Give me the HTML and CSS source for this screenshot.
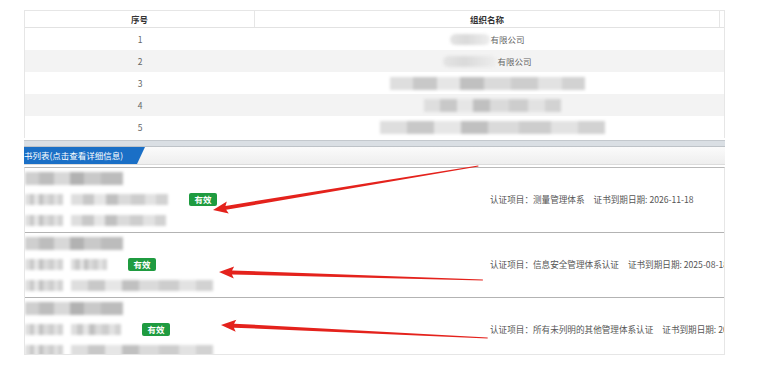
FILE: index.html
```html
<!DOCTYPE html>
<html lang="zh-CN">

<head>
    <meta charset="UTF-8">
    <title>证书列表</title>
    <link rel="stylesheet" href="styles.css">
</head>

<body>
    <div class="page">
        <div class="grid">
            <div class="grid-head">
                <div class="th th-no">序号</div>
                <div class="th th-name">组织名称</div>
                <div class="th th-gap"></div>
            </div>
            <div class="grid-row">
                <div class="td td-no">1</div>
                <div class="td td-name"><span class="mask mask-soft w40"></span>有限公司</div>
            </div>
            <div class="grid-row odd">
                <div class="td td-no">2</div>
                <div class="td td-name"><span class="mask mask-soft w54"></span>有限公司</div>
            </div>
            <div class="grid-row">
                <div class="td td-no">3</div>
                <div class="td td-name"><span class="mask mask-tall w195"></span></div>
            </div>
            <div class="grid-row odd">
                <div class="td td-no">4</div>
                <div class="td td-name"><span class="mask mask-tall w137 shift"></span></div>
            </div>
            <div class="grid-row">
                <div class="td td-no">5</div>
                <div class="td td-name"><span class="mask mask-tall w225 shift"></span></div>
            </div>
        </div>

        <div class="sep"></div>
        <div class="tabbar">
            <div class="tab">书列表(点击查看详细信息)</div>
        </div>

        <div class="list">
            <div class="cert">
                <div class="cert-line"><span class="mask mask-top w98"></span></div>
                <div class="cert-line"><span class="mask w38"></span><span class="mask w97"></span><span class="badge">有效</span></div>
                <div class="cert-info">认证项目：测量管理体系<span class="gap"></span>证书到期日期: 2026-11-18</div>
                <div class="cert-line"><span class="mask w38"></span><span class="mask w95"></span></div>
            </div>
            <div class="cert">
                <div class="cert-line"><span class="mask mask-top w98"></span></div>
                <div class="cert-line"><span class="mask w38"></span><span class="mask w36"></span><span class="badge">有效</span></div>
                <div class="cert-info">认证项目：信息安全管理体系认证<span class="gap"></span>证书到期日期: 2025-08-18</div>
                <div class="cert-line"><span class="mask w38"></span><span class="mask w142"></span></div>
            </div>
            <div class="cert last">
                <div class="cert-line"><span class="mask mask-top w98"></span></div>
                <div class="cert-line"><span class="mask w38"></span><span class="mask w50"></span><span class="badge">有效</span></div>
                <div class="cert-info">认证项目：所有未列明的其他管理体系认证<span class="gap"></span>证书到期日期: 2026-03-05</div>
                <div class="cert-line"><span class="mask w38"></span><span class="mask w142"></span></div>
            </div>
        </div>
    </div>

    <!-- 标注箭头 -->
    <svg class="arrows" width="762" height="376" viewBox="0 0 762 376">
        <g fill="#e4221c">
            <polygon transform="translate(213 210) rotate(-9.43)" points="0,0 15,-6 13,-2 269,-0.5 269,0.5 13,2 15,6" />
            <polygon transform="translate(219 272) rotate(1.74)" points="0,0 15,-6 13,-2 264,-0.5 264,0.5 13,2 15,6" />
            <polygon transform="translate(221 325) rotate(2.79)" points="0,0 15,-6 13,-2 267,-0.5 267,0.5 13,2 15,6" />
        </g>
    </svg>
</body>

</html>
```

FILE: styles.css
```css
* {
    box-sizing: border-box;
    padding: 0;
    margin: 0;
}

body {
    position: relative;
    background: #fff;
    font-family: "Noto Sans CJK SC", "Liberation Sans", sans-serif;
    color: #555;
}

.page {
    width: 701px;
    margin-left: 24px;
    padding-top: 10px;
}

/* 表格 */
.grid {
    border: 1px solid #e6e6e6;
    border-bottom: none;
}

.grid-head {
    display: flex;
    height: 17px;
    border-bottom: 1px solid #e2e2e2;
}

.th {
    font-size: 8.5px;
    font-weight: bold;
    color: #333;
    text-align: center;
    line-height: 16px;
    border-right: 1px solid #e6e6e6;
}

.th-no {
    width: 230px;
}

.th-name {
    width: 465px;
}

.th-gap {
    flex: 1;
    border-right: none;
}

.grid-row {
    display: flex;
    height: 22px;
    align-items: center;
}

.grid-row.odd {
    background-color: #f3f3f3;
}

.td {
    font-size: 8.5px;
    color: #666;
    text-align: center;
}

.td-no {
    width: 230px;
}

.td-name {
    width: 465px;
    display: flex;
    justify-content: center;
    align-items: center;
}

/* 打码 */
.mask {
    display: inline-block;
    height: 11px;
    margin-right: 8px;
    background: linear-gradient(90deg, #dedede 0 12%, #c8c8c8 12% 24%, #e6e6e6 24% 36%, #c0c0c0 36% 48%, #dadada 48% 62%, #cdcdcd 62% 76%, #e2e2e2 76% 88%, #d2d2d2 88%);
    filter: blur(1.5px);
}

.mask-top {
    height: 13px;
    background: linear-gradient(90deg, #cfcfcf 0 14%, #bdbdbd 14% 30%, #d8d8d8 30% 46%, #b2b2b2 46% 60%, #c9c9c9 60% 78%, #bcbcbc 78%);
}

.mask-soft {
    margin-right: 0;
    height: 11px;
    border-radius: 6px;
    background: linear-gradient(90deg, #e4e4e4, #dadada 40%, #eeeeee);
}

.mask-tall {
    margin-right: 0;
    height: 13px;
}

.shift {
    margin-left: 10px;
}

.w36 { width: 36px; }
.w38 { width: 38px; }
.w40 { width: 40px; }
.w50 { width: 50px; }
.w54 { width: 54px; }
.w95 { width: 95px; }
.w97 { width: 97px; }
.w98 { width: 98px; }
.w137 { width: 137px; }
.w142 { width: 142px; }
.w195 { width: 195px; }
.w225 { width: 225px; }

/* 证书列表标题 */
.sep {
    margin-top: 2px;
    height: 7px;
    border-top: 1px solid #c4c9ce;
    border-bottom: 1px solid #bec3c8;
    background-color: #dadfe4;
}

.tabbar {
    height: 18px;
    border-bottom: 1px solid #dcdcdc;
    background: linear-gradient(#fbfbfb, #eeeeee);
}

.tab {
    width: 121px;
    height: 17px;
    line-height: 17px;
    font-size: 8.5px;
    color: #fff;
    white-space: nowrap;
    background-color: #1a6fc6;
    clip-path: polygon(0 0, 121px 0, 113px 100%, 0 100%);
}

.list {
    margin-top: 2px;
    height: 188px;
    overflow: hidden;
    border: 1px solid #e6e6e6;
    border-top: 1px solid #b9b9b9;
}

.cert {
    display: grid;
    grid-template-columns: 465px 1fr;
    grid-template-rows: 21px 21px 21px;
    height: 65px;
    border-bottom: 1px solid #b3b3b3;
}

.cert.last {
    border-bottom: none;
}

.cert-line {
    grid-column: 1;
    display: flex;
    align-items: center;
}

.cert-info {
    grid-column: 2;
    grid-row: 2;
    font-size: 8.6px;
    line-height: 21px;
    color: #555;
    white-space: nowrap;
}

.gap {
    display: inline-block;
    width: 9px;
}

.badge {
    display: inline-block;
    width: 28px;
    height: 13px;
    margin-left: 13px;
    border-radius: 2px;
    background-color: #1f9b40;
    color: #fff;
    font-size: 8.5px;
    font-weight: bold;
    line-height: 13px;
    text-align: center;
}

.arrows {
    position: absolute;
    top: 0;
    left: 0;
    pointer-events: none;
}
```
